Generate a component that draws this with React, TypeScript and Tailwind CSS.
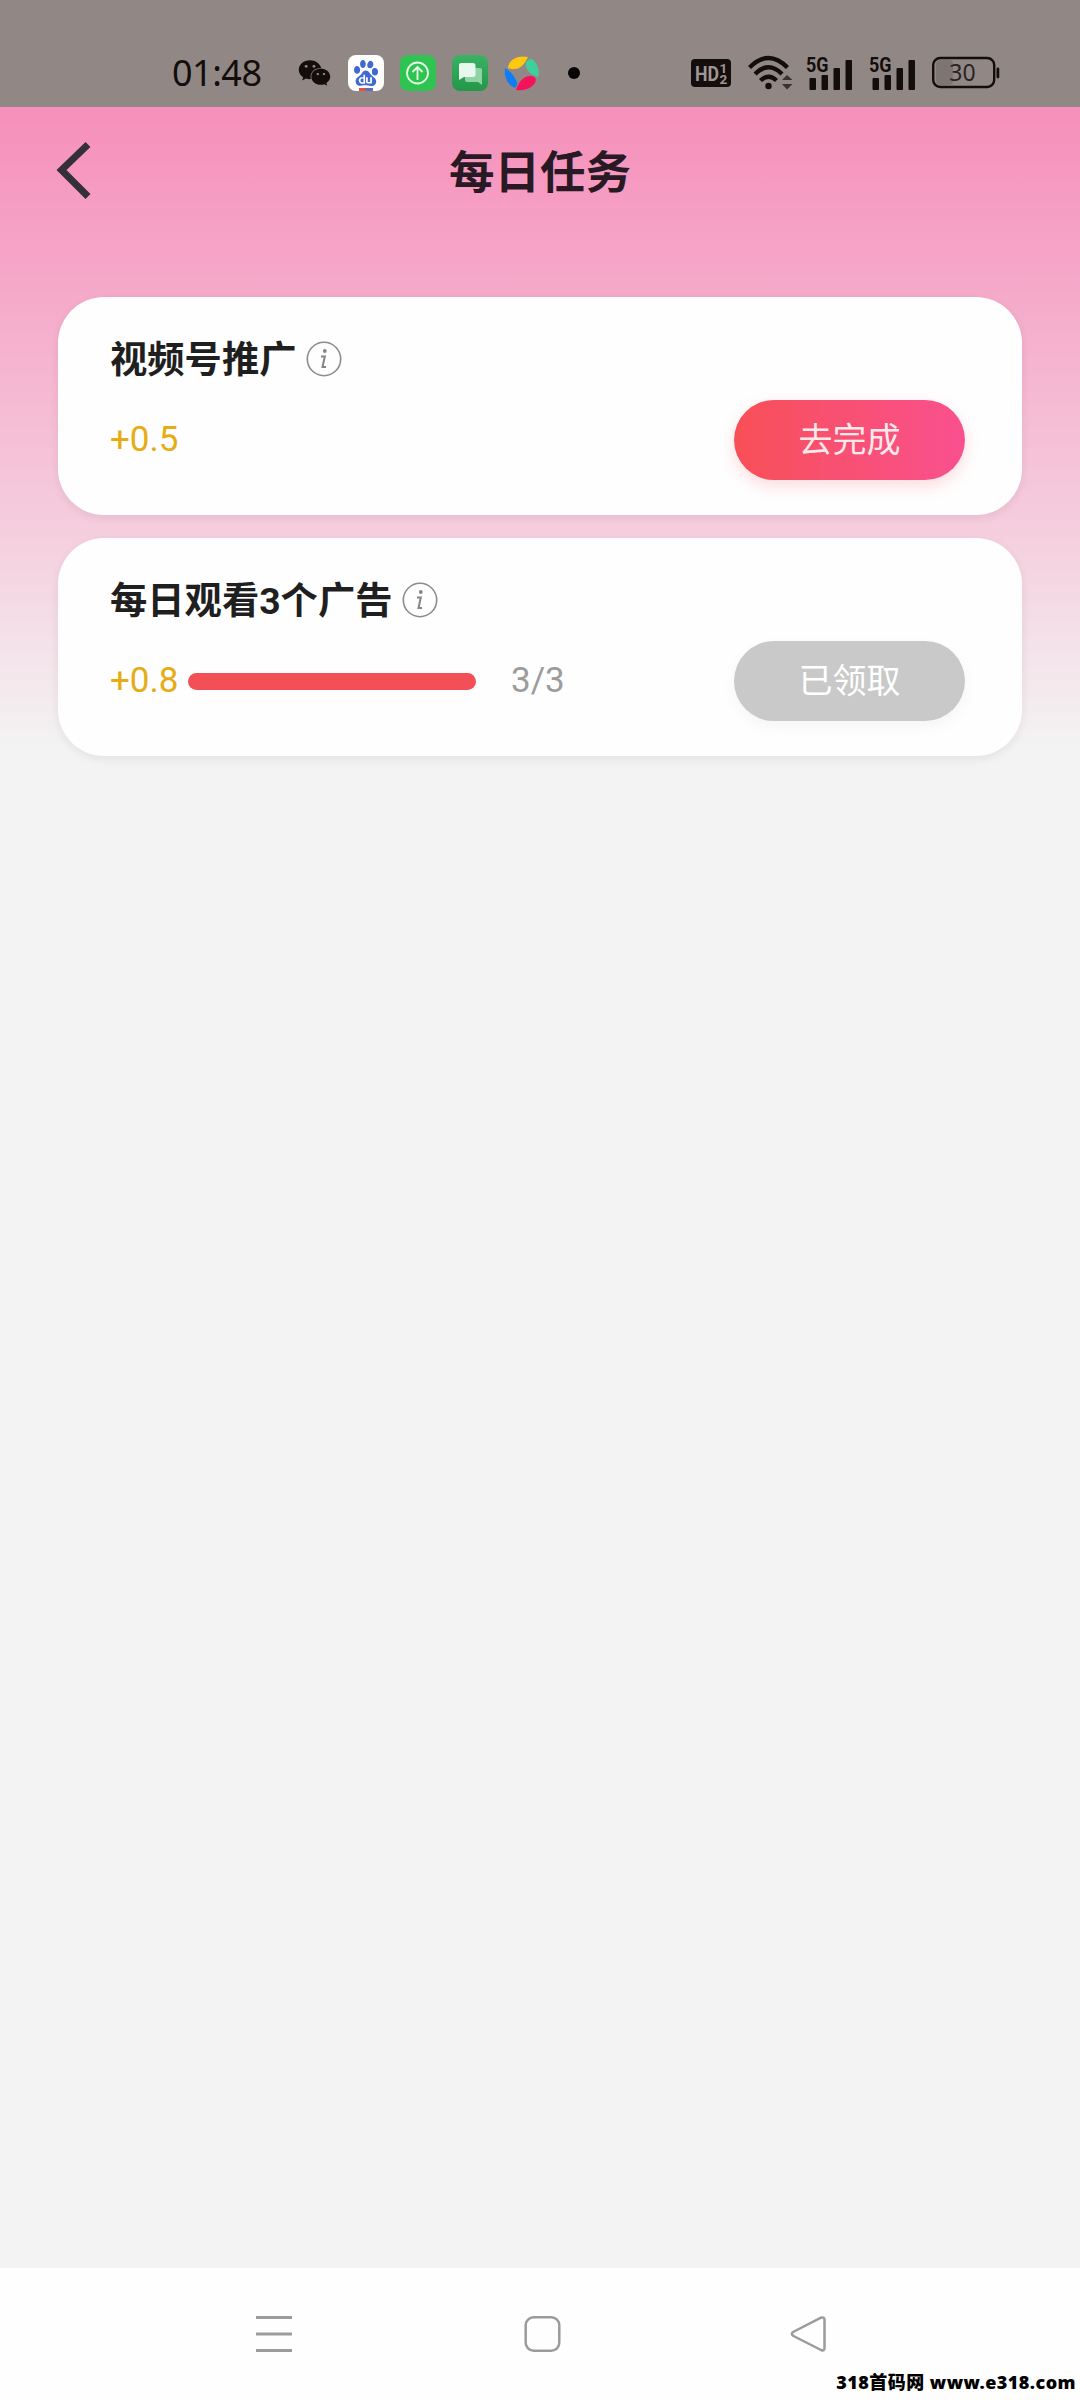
import type { ReactNode } from "react";
import { FaWeixin } from "react-icons/fa";
import { SiBaidu } from "react-icons/si";

const INK = "#130d0c";

function Swirl() {
  return (
    <svg className="ml-[16px]" width="36" height="36" viewBox="0 0 36 36">
      <path d="M4 13C5 4 14 0 24 2C21 8 17 14 11 14Q7 14.500 4 13Z" fill="#fdc80d" />
      <path d="M22 11C21 7 24 4 28 4C34 9 36 16 34 22C28 20 23 17 22 11Z" fill="#3fcf9f" />
      <path d="M12 35C15 26 20 21 26 21C31 21 33 24 31 28C27 34 19 36 12 35Z" fill="#f5125c" />
      <path d="M1 13C6 16 10 20 13 27Q14 30 11 33C2 29 0 20 1 13Z" fill="#127cf5" />
    </svg>
  );
}

function HdBadge() {
  return (
    <svg width="40" height="28" viewBox="0 0 40 28">
      <rect width="40" height="28" rx="4" fill={INK} />
      <g fill="#9f9692" fontFamily="Roboto, sans-serif" fontWeight="700">
        <text x="4" y="21.500" fontSize="21" textLength="24" lengthAdjust="spacingAndGlyphs">HD</text>
        <text x="28.500" y="13.500" fontSize="13.500">1</text>
        <text x="28.500" y="25" fontSize="13.500">2</text>
      </g>
    </svg>
  );
}

function Wifi() {
  return (
    <svg className="ml-[17px]" width="46" height="36" viewBox="0 0 46 36">
      <g fill="none" stroke={INK} strokeWidth="4.400">
        <path d="M1.500 12.500Q20.500 -6.500 39.500 12.500" />
        <path d="M7 19Q20.500 5.500 34 19" />
        <path d="M12.500 25.500Q20.500 18 28.500 25.500" />
      </g>
      <circle cx="20.500" cy="31" r="3.200" fill={INK} />
      <path d="M34 25L39 20L44.500 25ZM34 29L39 34.500L44.500 29Z" fill="#383230" />
    </svg>
  );
}

function Signal({ className }: { className: string }) {
  return (
    <svg className={className} width="47" height="40" viewBox="0 -4 47 40">
      <text x="0" y="14.500" fontSize="19.500" fontWeight="700" fontFamily="Roboto, sans-serif" fill={INK} textLength="22.500" lengthAdjust="spacingAndGlyphs">
        5G
      </text>
      <g fill={INK}>
        <rect x="3.500" y="21" width="6.500" height="12" rx="1" />
        <rect x="15.500" y="18" width="6.500" height="15" rx="1" />
        <rect x="27.500" y="11" width="6.500" height="22" rx="1" />
        <rect x="39.500" y="3" width="6.500" height="30" rx="1" />
      </g>
    </svg>
  );
}

function Battery() {
  return (
    <svg className="ml-[16px]" width="68" height="34" viewBox="0 0 68 34">
      <rect x="4" y="4" width="17" height="25" rx="4" fill="#7e7572" />
      <rect x="1.200" y="2" width="61" height="29" rx="7" fill="none" stroke={INK} strokeWidth="2.400" />
      <rect x="64.500" y="11.500" width="2.800" height="11" rx="1.400" fill={INK} />
      <text x="30.500" y="25" fontSize="23" textAnchor="middle" fontFamily="Noto Sans, sans-serif" fill="#2a2322">
        30
      </text>
    </svg>
  );
}

function StatusBar() {
  return (
    <header className="flex h-[107px] items-center bg-[#918885] pt-[38px] pr-[80px] pl-[172px]">
      <span className="w-[126px] font-['Noto_Sans',sans-serif] text-[36px] leading-none tracking-[-0.5px] text-[#130d0c]">01:48</span>
      <FaWeixin className="h-[34px] w-[33px] text-[#130d0c]" />
      <span className="ml-[17px] flex size-9 flex-col items-center justify-end rounded-lg bg-white">
        <SiBaidu className="size-[26px] text-[#3f68d2]" />
        <span className="mt-[2px] h-[3px] w-[14px] bg-linear-to-r from-[#d9534b] from-50% to-[#5a6fc4] to-50%" />
      </span>
      <svg className="ml-[16px]" width="36" height="36" viewBox="0 0 36 36">
        <rect width="36" height="36" rx="8" fill="#2fc451" />
        <g fill="none" stroke="#e6ffe9" strokeWidth="1.800">
          <circle cx="17.500" cy="18" r="10.500" />
          <path d="M17.500 25V12M12.500 17L17.500 12L22.500 17" />
        </g>
      </svg>
      <svg className="ml-[16px]" width="36" height="36" viewBox="0 0 36 36">
        <defs>
          <linearGradient id="chat" x1="0" y1="0" x2="0" y2="1">
            <stop stopColor="#39b364" />
            <stop offset="1" stopColor="#249648" />
          </linearGradient>
        </defs>
        <rect width="36" height="36" rx="8" fill="url(#chat)" />
        <path d="M15 13H28Q30 13 30 15V30L26 27H15Q13 27 13 25V15Q13 13 15 13Z" fill="#8fd3a5" />
        <path d="M9 8H21Q23.500 8 23.500 10.500V19.500Q23.500 22 21 22H12L7 25V10Q7 8 9 8Z" fill="#e8f8ec" />
      </svg>
      <Swirl />
      <span className="ml-[28px] size-3 rounded-full bg-[#080505]" />
      <div className="ml-auto flex items-center">
        <HdBadge />
        <Wifi />
        <Signal className="ml-[12px]" />
        <Signal className="ml-[16px]" />
        <Battery />
      </div>
    </header>
  );
}

function InfoIcon() {
  return (
    <svg width="36" height="36" viewBox="0 0 36 36">
      <circle cx="18" cy="18" r="16.700" fill="none" stroke="#8c8c8c" strokeWidth="1.600" />
      <circle cx="18.800" cy="10" r="1.900" fill="#858585" />
      <path d="M15 15.500H18.800L16.500 26H20" fill="none" stroke="#858585" strokeWidth="2" />
    </svg>
  );
}

interface TaskProps {
  title: string;
  reward: string;
  children?: ReactNode;
  action: string;
  done?: boolean;
}

function TaskCard({ title, reward, children, action, done }: TaskProps) {
  return (
    <section className="h-[218px] rounded-[46px] bg-[#fefefe] pt-[34px] pr-[57px] pl-[52px] shadow-[0_3px_10px_rgba(0,0,0,0.07)]">
      <div className="flex h-14 items-center gap-[10px]">
        <h2 className="pt-[3px] text-[37.300px] leading-none font-bold text-[#1f1f1f]">{title}</h2>
        <InfoIcon />
      </div>
      <div className="mt-[13px] flex h-20 items-center">
        <span className="w-[78px] pb-[2px] text-[35px] leading-none text-[#e6ac14]">{reward}</span>
        {children}
        <button
          className={
            done
              ? "ml-auto h-20 w-[231px] rounded-full bg-[#c9c9c9] text-[34px] text-white shadow-[0_6px_16px_rgba(0,0,0,0.04)]"
              : "ml-auto h-20 w-[231px] rounded-full bg-linear-to-r from-[#f84f56] to-[#f9508f] text-[34px] text-[#ffe9ea] shadow-[0_6px_16px_rgba(250,80,95,0.2)]"
          }
        >
          {action}
        </button>
      </div>
    </section>
  );
}

function NavBar() {
  return (
    <footer className="flex h-[132px] flex-col bg-[#fefefe]">
      <div className="flex h-[94px] items-end justify-between pr-[252px] pb-[8px] pl-[255px]">
        <svg width="38" height="40" viewBox="0 0 38 40" stroke="#9b9b9b" strokeWidth="2.800">
          <path d="M1 3.500H37M1 20H37M1 36.500H37" />
        </svg>
        <svg width="38" height="40" viewBox="0 0 38 40" fill="none" stroke="#9b9b9b" strokeWidth="2.500">
          <rect x="2.700" y="3.200" width="33.600" height="33.600" rx="8" />
        </svg>
        <svg width="38" height="40" viewBox="0 0 38 40" fill="none" stroke="#9b9b9b" strokeWidth="2.500" strokeLinejoin="round">
          <path d="M3 18L31 3.700Q34.500 2.500 34.500 6V34Q34.500 37.500 31 36L3.500 22Q0.500 20 3 18Z" />
        </svg>
      </div>
      <p className="mt-auto mr-[4px] mb-[5px] self-end font-['Noto_Sans','Noto_Sans_CJK_SC',sans-serif] text-[18px] leading-[26px] font-black tracking-[0.450px] whitespace-nowrap text-black">
        318首码网 www.e318.com
      </p>
    </footer>
  );
}

export default function App() {
  return (
    <div className="flex h-[2400px] w-[1080px] flex-col bg-[#f3f3f3] font-[Roboto,'Noto_Sans_CJK_SC',sans-serif]">
      <StatusBar />
      <main className="flex-1 bg-[linear-gradient(to_bottom,#f68fbb_0,#f5abca_195px,#f5cede_425px,#f3f3f3_640px)]">
        <div className="grid h-[128px] grid-cols-[1fr_auto_1fr] items-center px-[56px]">
          <svg width="36" height="60" viewBox="0 0 36 60" fill="none" stroke="#333037" strokeWidth="7">
            <path d="M32 3.500L5.500 29L32 55.500" />
          </svg>
          <h1 className="pt-[5px] text-[45.500px] leading-none font-bold text-[#291925]">每日任务</h1>
        </div>
        <div className="flex flex-col gap-[23px] px-[58px] pt-[62px]">
          <TaskCard title="视频号推广" reward="+0.5" action="去完成" />
          <TaskCard title="每日观看3个广告" reward="+0.8" action="已领取" done>
            <div className="h-[17px] w-[288px] rounded-full bg-[#f25056]" />
            <span className="ml-[35px] pb-[2px] text-[35px] leading-none text-[#9c9c9c]">3/3</span>
          </TaskCard>
        </div>
      </main>
      <NavBar />
    </div>
  );
}
